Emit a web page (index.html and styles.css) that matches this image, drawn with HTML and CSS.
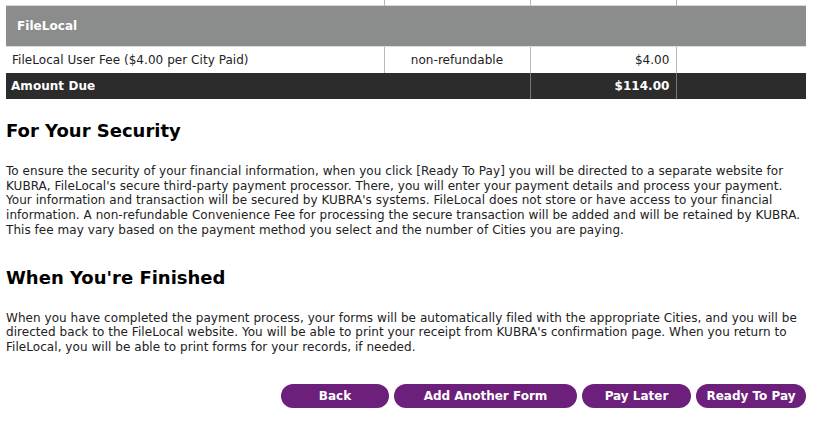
FILE: index.html
```html
<!doctype html>
<html lang="en">

<head>
    <title>Payment Summary</title>
    <meta charset="UTF-8" />
    <meta name="viewport" content="width=device-width, initial-scale=1" />
    <link rel="stylesheet" href="styles.css">
</head>

<body>
    <div class="page">
        <table class="fees">
            <colgroup>
                <col class="c-desc">
                <col class="c-note">
                <col class="c-amt">
                <col class="c-end">
            </colgroup>
            <tr class="cut">
                <td></td><td></td><td></td><td></td>
            </tr>
            <tr class="group">
                <td colspan="4">FileLocal</td>
            </tr>
            <tr class="item">
                <td>FileLocal User Fee ($4.00 per City Paid)</td>
                <td class="mid">non-refundable</td>
                <td class="num">$4.00</td>
                <td></td>
            </tr>
            <tr class="total">
                <td colspan="2">Amount Due</td>
                <td class="num">$114.00</td>
                <td></td>
            </tr>
        </table>

        <h2>For Your Security</h2>
        <p>To ensure the security of your financial information, when you click [Ready To Pay] you will be directed to a separate website for KUBRA, FileLocal's secure third-party payment processor. There, you will enter your payment details and process your payment. Your information and transaction will be secured by KUBRA's systems. FileLocal does not store or have access to your financial information. A non-refundable Convenience Fee for processing the secure transaction will be added and will be retained by KUBRA. This fee may vary based on the payment method you select and the number of Cities you are paying.</p>

        <h2 class="second">When You're Finished</h2>
        <p class="last">When you have completed the payment process, your forms will be automatically filed with the appropriate Cities, and you will be directed back to the FileLocal website. You will be able to print your receipt from KUBRA's confirmation page. When you return to FileLocal, you will be able to print forms for your records, if needed.</p>

        <div class="actions">
            <button class="btn back">Back</button>
            <button class="btn add">Add Another Form</button>
            <button class="btn later">Pay Later</button>
            <button class="btn ready">Ready To Pay</button>
        </div>
    </div>
</body>

</html>
```

FILE: styles.css
```css
body {
    margin: 0;
    padding: 0;
    background: #fff;
    color: #222;
    font-family: Verdana, "DejaVu Sans", sans-serif;
    font-size: 12px;
}

.page {
    width: 800px;
    padding: 0 6px;
}

.fees {
    width: 800px;
    border-collapse: collapse;
    table-layout: fixed;
}

.c-desc { width: 378px; }
.c-note { width: 146px; }
.c-amt { width: 146px; }
.c-end { width: 130px; }

.fees td {
    padding: 0 6px;
    border-left: 1px solid #b8b8b8;
    white-space: nowrap;
    letter-spacing: 0.05px;
}

.fees td:first-child {
    border-left: none;
}

.cut td {
    height: 5px;
    padding: 0;
}

.group td {
    height: 40px;
    padding-left: 11px;
    background: #8b8c8c;
    color: #fff;
    font-weight: bold;
    border-top: 1px solid #d8d8d8;
}

.item td {
    height: 26px;
    border-top: 1px solid #ddd;
}

.total td {
    height: 26px;
    padding-left: 5px;
    background: #2c2c2c;
    color: #fff;
    font-weight: bold;
    border-left-color: #777;
}

.total td.num {
    padding-right: 6px;
}

.mid {
    text-align: center;
}

.num {
    text-align: right;
}

h2 {
    margin: 20px 0 0;
    font-size: 18px;
    line-height: 24px;
    color: #000;
}

h2.second {
    margin-top: 28px;
}

p {
    margin: 21px 0 0;
    line-height: 14.7px;
    letter-spacing: 0.05px;
}

p.last {
    margin-top: 21px;
}

.actions {
    display: flex;
    justify-content: flex-end;
    gap: 5px;
    margin-top: 29px;
}

.btn {
    height: 24px;
    border: none;
    border-radius: 12px;
    background: #6c1f7b;
    color: #fff;
    font-family: Verdana, "DejaVu Sans", sans-serif;
    font-size: 12px;
    font-weight: bold;
    padding: 0 10px;
}

.back { width: 108px; }
.add { width: 183px; }
.later { width: 109px; }
.ready { width: 110px; }
```
